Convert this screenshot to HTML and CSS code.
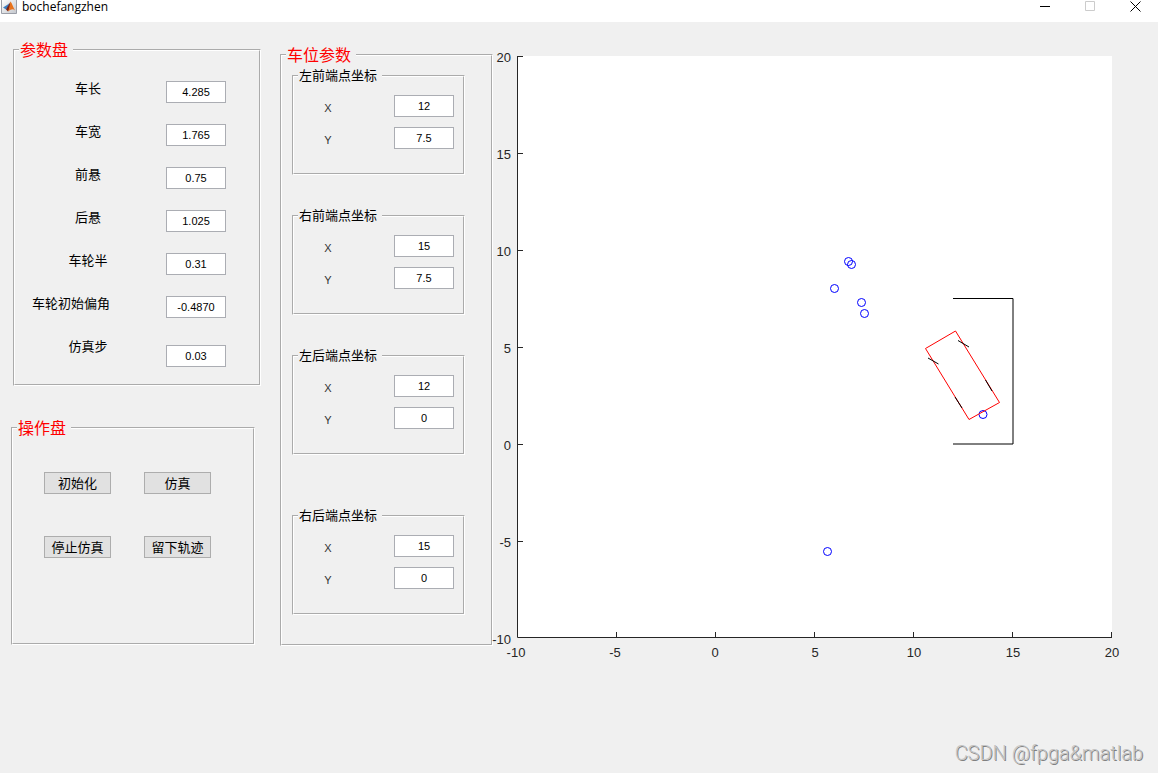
FILE: index.html
```html
<!DOCTYPE html>
<html lang="zh-CN">

<head>
    <meta charset="utf-8">
    <title>bochefangzhen</title>
    <link rel="stylesheet" href="styles.css">
</head>

<body>
    <header class="titlebar">
        <svg class="app-icon" width="16" height="14" viewBox="0 0 16 14">
            <defs>
                <linearGradient id="iconBg" x1="0" y1="0" x2="1" y2="1">
                    <stop offset="0" stop-color="#fff" />
                    <stop offset="1" stop-color="#c3c7cd" />
                </linearGradient>
            </defs>
            <path d="M.5 0V13.5H15.5V0" fill="url(#iconBg)" stroke="#9b9fa8" />
            <path d="M2 7.5L6 5L8 3.5L7.5 7L5 9.5Z" fill="#3d7fc0" />
            <path d="M5 9.5L7 6L9.5 1.5L9 8L7 11.5Z" fill="#7c2417" />
            <path d="M9.5 1.5C11 3 12 7 14 10.5C12 8.5 10.5 9 7 11.5C8.5 8 8.7 5 9.5 1.5Z" fill="#e8731c" />
        </svg>
        <span class="title">bochefangzhen</span>
        <div class="window-buttons">
            <button type="button" aria-label="最小化">
                <svg width="11" height="11"><path d="M0 5.5H10" stroke="#000" /></svg>
            </button>
            <button type="button" aria-label="最大化" disabled>
                <svg width="11" height="11"><path d="M.5 .5H9.5V9.5H.5Z" fill="none" stroke="#ccc" /></svg>
            </button>
            <button type="button" aria-label="关闭">
                <svg width="11" height="11"><path d="M.5 .5L10.5 10.5M10.5 .5L.5 10.5" stroke="#000" /></svg>
            </button>
        </div>
    </header>

    <main class="workspace">
        <div class="side">
            <fieldset class="panel car-panel">
                <legend>参数盘</legend>
                <div class="row"><label for="length">车长</label><input id="length" type="text" value="4.285"></div>
                <div class="row"><label for="width">车宽</label><input id="width" type="text" value="1.765"></div>
                <div class="row"><label for="front">前悬</label><input id="front" type="text" value="0.75"></div>
                <div class="row"><label for="rear">后悬</label><input id="rear" type="text" value="1.025"></div>
                <div class="row"><label for="wheel">车轮半</label><input id="wheel" type="text" value="0.31"></div>
                <div class="row long"><label for="angle">车轮初始偏角</label><input id="angle" type="text" value="-0.4870"></div>
                <div class="row last"><label for="step">仿真步</label><input id="step" type="text" value="0.03"></div>
            </fieldset>

            <fieldset class="panel control-panel">
                <legend>操作盘</legend>
                <div class="buttons">
                    <button type="button">初始化</button>
                    <button type="button">仿真</button>
                    <button type="button">停止仿真</button>
                    <button type="button">留下轨迹</button>
                </div>
            </fieldset>
        </div>

        <fieldset class="panel slot-panel">
            <legend>车位参数</legend>
            <fieldset class="corner">
                <legend>左前端点坐标</legend>
                <div class="coord"><label for="lfx">X</label><input id="lfx" type="text" value="12"></div>
                <div class="coord"><label for="lfy">Y</label><input id="lfy" type="text" value="7.5"></div>
            </fieldset>
            <fieldset class="corner">
                <legend>右前端点坐标</legend>
                <div class="coord"><label for="rfx">X</label><input id="rfx" type="text" value="15"></div>
                <div class="coord"><label for="rfy">Y</label><input id="rfy" type="text" value="7.5"></div>
            </fieldset>
            <fieldset class="corner">
                <legend>左后端点坐标</legend>
                <div class="coord"><label for="lrx">X</label><input id="lrx" type="text" value="12"></div>
                <div class="coord"><label for="lry">Y</label><input id="lry" type="text" value="0"></div>
            </fieldset>
            <fieldset class="corner">
                <legend>右后端点坐标</legend>
                <div class="coord"><label for="rrx">X</label><input id="rrx" type="text" value="15"></div>
                <div class="coord"><label for="rry">Y</label><input id="rry" type="text" value="0"></div>
            </fieldset>
        </fieldset>

        <svg class="plot" viewBox="-24 -34 665 640">
            <rect width="595" height="582" fill="#fff" />
            <!-- axes and ticks -->
            <path class="axis" d="M.5 0V581.5H595
                M0 .5H6M0 97.5H6M0 194.5H6M0 291.5H6M0 388.5H6M0 485.5H6
                M99.5 582V576M198.5 582V576M297.5 582V576M396.5 582V576M495.5 582V576M594.5 582V576" />
            <g class="ticks-y">
                <text x="-6" y="6">20</text>
                <text x="-6" y="103">15</text>
                <text x="-6" y="200">10</text>
                <text x="-6" y="297">5</text>
                <text x="-6" y="394">0</text>
                <text x="-6" y="491">-5</text>
                <text x="-6" y="588">-10</text>
            </g>
            <g class="ticks-x">
                <text x="-1" y="601">-10</text>
                <text x="98" y="601">-5</text>
                <text x="198" y="601">0</text>
                <text x="298" y="601">5</text>
                <text x="397" y="601">10</text>
                <text x="496" y="601">15</text>
                <text x="595" y="601">20</text>
            </g>
            <!-- parking slot -->
            <path class="slot" d="M436 242.5H496V388H436" />
            <!-- trajectory points -->
            <g class="points">
                <circle cx="331.5" cy="205.5" r="4" />
                <circle cx="334.5" cy="208.5" r="4" />
                <circle cx="317.5" cy="232.5" r="4" />
                <circle cx="344.5" cy="246.5" r="4" />
                <circle cx="347.5" cy="257.5" r="4" />
                <circle cx="466" cy="358.5" r="4" />
                <circle cx="310.5" cy="495.5" r="4" />
            </g>
            <!-- car body and wheels -->
            <path class="car" d="M438.5 275L408.5 292.5L452 363.5L482.5 346.5Z" />
            <path class="slot" d="M441 284.5L452 291M411 302L421.5 308M468.5 324L475 335M438 341L445 352" />
        </svg>
    </main>

    <div class="watermark">CSDN @fpga&amp;matlab</div>
</body>

</html>
```
FILE: styles.css
```css
* {
    box-sizing: border-box;
}

body {
    margin: 0;
    min-height: 100vh;
    background-color: #f0f0f0;
    color: #000;
    font-family: "Liberation Sans", "Noto Sans CJK SC", sans-serif;
    font-size: 13px;
    position: relative;
}

.titlebar {
    display: flex;
    align-items: flex-start;
    height: 22px;
    background-color: #fff;
}

.app-icon {
    margin: 0 5px 0 1px;
}

.title {
    flex: 1;
    font-family: "Open Sans", sans-serif;
    font-size: 12px;
    line-height: 14px;
}

.window-buttons {
    display: flex;
}

.window-buttons button {
    display: flex;
    justify-content: center;
    width: 45px;
    height: 22px;
    padding: 1px 0 0;
    border: none;
    background: none;
}

.workspace {
    display: flex;
    align-items: flex-start;
}

fieldset {
    min-width: 0;
    margin: 0;
    border: 2px groove #fff;
}

legend {
    padding: 0 5px 0 1px;
}

.panel {
    padding: 0 4px;
}

.panel > legend {
    padding-top: 1px;
    color: #f00;
    font-size: 16px;
    line-height: 19px;
}

.side {
    flex: none;
    width: 250px;
    margin: 18px 19px 0 11px;
}

.car-panel {
    height: 346px;
    margin: 0 0 32px 2px;
    padding-top: 21px;
}

.row {
    display: grid;
    grid-template-columns: 138px 60px;
    column-gap: 9px;
    align-items: start;
    height: 43px;
}

.row label {
    text-align: center;
    line-height: 16px;
}

.row.long label {
    padding-right: 34px;
}

.row.last {
    height: 28px;
}

.row.last input {
    align-self: end;
}

input {
    width: 60px;
    height: 22px;
    padding: 0;
    border: 1px solid #abadb3;
    background-color: #fff;
    font-family: "Liberation Sans", sans-serif;
    font-size: 11px;
    text-align: center;
}

.control-panel {
    width: 244px;
    height: 227px;
    padding: 34px 0 0 31px;
}

.control-panel legend {
    margin-left: -27px;
}

.buttons {
    display: grid;
    grid-template-columns: 67px 67px;
    gap: 42px 33px;
}

.buttons button {
    height: 22px;
    padding: 0;
    border: 1px solid #adadad;
    background-color: #e1e1e1;
    color: #000;
    font-family: "Noto Sans CJK SC", sans-serif;
    font-size: 13px;
    line-height: 20px;
}

.slot-panel {
    flex: none;
    width: 213px;
    height: 601px;
    margin-top: 23px;
}

.corner {
    width: 173px;
    height: 107px;
    margin: 0 0 33px 6px;
    padding: 11px 4px 0;
}

.corner:first-of-type {
    margin-top: 3px;
}

.corner:last-of-type {
    margin-top: 53px;
}

.corner legend {
    line-height: 16px;
}

.coord {
    display: grid;
    grid-template-columns: 60px 60px;
    column-gap: 36px;
    align-items: center;
    height: 22px;
    margin-bottom: 10px;
}

.coord label {
    padding-top: 4px;
    color: #333;
    font-size: 11px;
    text-align: center;
}

.plot {
    flex: 1;
    min-width: 0;
    overflow: visible;
}

.axis {
    fill: none;
    stroke: #262626;
}

.ticks-x text,
.ticks-y text {
    fill: #262626;
    font-size: 13px;
}

.ticks-x {
    text-anchor: middle;
}

.ticks-y {
    text-anchor: end;
}

.slot {
    fill: none;
    stroke: #000;
}

.points {
    fill: none;
    stroke: #00f;
}

.car {
    fill: none;
    stroke: #f00;
}

.watermark {
    position: absolute;
    right: 15px;
    bottom: 8px;
    color: #c4c4c4;
    font-family: Roboto, sans-serif;
    font-size: 20px;
    font-weight: 300;
    line-height: 24px;
    text-shadow: 1px 1px 0 #808080;
}
```
